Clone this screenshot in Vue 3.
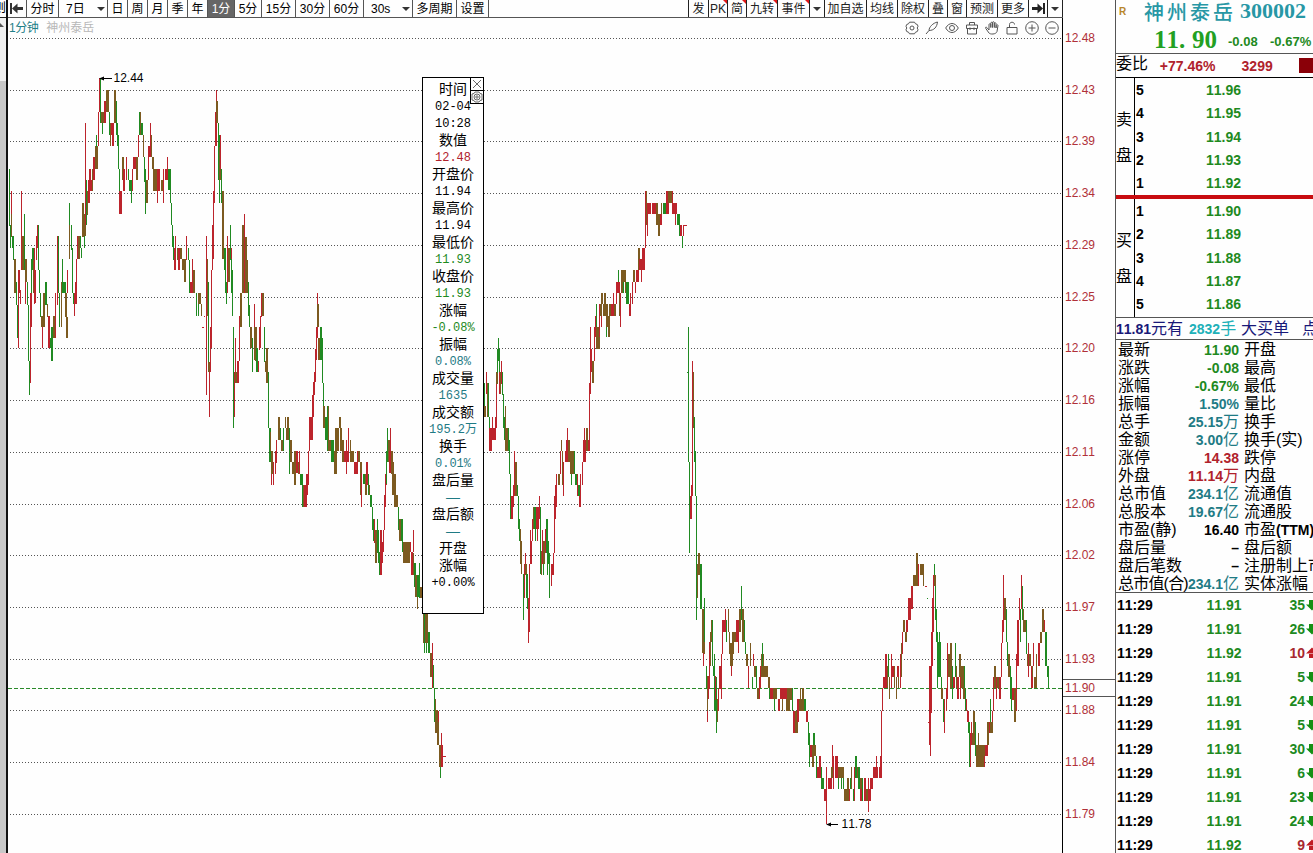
<template>
  <div class="terminal">
    <aside class="scroll-strip">
      <div class="strip-top"><span class="strip-char">则</span></div>
      <div class="strip-track"><i class="strip-arrow"></i></div>
      <div class="strip-thumb"></div>
    </aside>

    <main class="main">
      <header class="toolbar">
        <div
          v-for="(t, i) in leftTools"
          :key="'l' + i"
          class="tool"
          :class="{ active: t.active, drop: t.drop }"
          :style="{ width: t.w + 'px' }"
        >
          <svg v-if="t.icon" width="14" height="11" viewBox="0 0 14 11">
            <path d="M0 0h2v11H0z M2 5.5 7.5 0.5V4H13v3H7.5v3.5z" fill="#333" />
          </svg>
          <span v-else>{{ t.text }}</span>
          <i v-if="t.drop" class="caret"></i>
        </div>
        <div class="spacer"></div>
        <div
          v-for="(t, i) in rightTools"
          :key="'r' + i"
          class="tool right"
          :style="{ width: t.w + 'px' }"
        >
          <svg v-if="t.icon" width="13" height="11" viewBox="0 0 13 11">
            <path d="M11 0h2v11h-2z M11 5.5 5.5 0.5V4H0v3h5.5v3.5z" fill="#222" />
          </svg>
          <span v-else-if="t.text">{{ t.text }}</span>
          <i v-else class="caret"></i>
          <i v-if="t.hot" class="corner"></i>
        </div>
      </header>

      <section class="body">
        <div class="chart">
          <div class="chart-head">
            <div class="title"><b>1分钟</b><em>神州泰岳</em></div>
            <div class="icons">
              <svg viewBox="0 0 14 14">
                <path d="M4.500 1.200h5l1 1.600 1.800.7.7 1.800-.8 1.700.8 1.700-.7 1.800-1.800.7-1 1.600h-5l-1-1.600-1.800-.7L1 8.700 1.800 7 1 5.300l.7-1.800 1.800-.7z" />
                <circle cx="7" cy="7" r="2" />
              </svg>
              <svg viewBox="0 0 14 14"><path d="M1 13 4 9.500C4 6 8 2 12.500 1 12 6 9 9.500 4 9.500" /></svg>
              <svg viewBox="0 0 14 14"><path d="M.7 7C4 1 10 1 13.300 7 10 13 4 13 .7 7z" /><circle cx="7" cy="7" r="2.500" /></svg>
              <svg viewBox="0 0 14 14"><path d="M1.500 4h11v3.500h-11zM2.500 7.500V13h9V7.500M4.500 4V1.500h5V4M5 6.500v2.500M9 6.500v2.500" /></svg>
              <svg viewBox="0 0 14 14"><path d="M4 9 1.800 6.500C.8 5.500 0 6.500 1 7.800L4 12c1 1.500 7 1.700 8-1.500L13 4.500c0-1-1.500-1-1.700 0L11 7V2.500c0-1-1.700-1-1.700 0V6.500 1.500c0-1-1.800-1-1.800 0v5V2c0-1-1.700-1-1.700 0v4.500V3.500c0-1-1.800-1-1.800 0z" /></svg>
              <svg viewBox="0 0 14 14"><path d="M2 6.500h10V13H2zM4.500 6.500V3.500C4.500.5 9.500.5 9.500 3.500" /></svg>
              <svg viewBox="0 0 14 14"><circle cx="7" cy="7" r="6.300" /><path d="M3.500 7h7M7 3.500v7" /></svg>
              <svg viewBox="0 0 14 14"><circle cx="7" cy="7" r="6.300" /><path d="M3.500 7h7" /></svg>
            </div>
          </div>

          <svg class="plot" width="1054" height="835" viewBox="8 18 1054 835">
            <line
              v-for="g in axis"
              :key="g.y"
              x1="10"
              x2="1062"
              :y1="g.y + 0.5"
              :y2="g.y + 0.5"
              class="grid"
            />
            <line x1="8" x2="1062" y1="688.5" y2="688.5" class="last" />
            <g v-for="(s, i) in series" :key="i" :transform="s.transform">
              <rect
                v-for="(c, j) in s.bars"
                :key="j"
                :x="c.x"
                :y="c.y"
                :width="c.w"
                :height="c.h"
                :class="c.k"
              />
            </g>
            <path d="M101 78.500H112M827 824.500H838" class="pointer" />
            <path d="M99 78.500l5-2v4zM826 824.500l5-2v4z" />
            <text x="113.500" y="82">12.44</text>
            <text x="841.500" y="828">11.78</text>
          </svg>

          <div class="popup">
            <div class="popup-tools">
              <svg viewBox="0 0 12 12"><path d="M2 2l8 8M10 2l-8 8" /></svg>
              <svg viewBox="0 0 12 12">
                <path d="M4 1h4l1 1.500 2 .5v6l-2 .5L8 11H4L3 9.500 1 9V3l2-.5z" />
                <circle cx="6" cy="6" r="3" /><circle cx="6" cy="6" r="1.200" />
              </svg>
            </div>
            <div v-for="(p, i) in popup" :key="i" class="popup-row" :class="p[1]">{{ p[0] }}</div>
          </div>
        </div>

        <div class="axis">
          <span v-for="g in axis" :key="g.y" class="axis-label" :style="{ top: g.y - 26 + 'px' }">{{ g.label }}</span>
          <span class="axis-label current">11.90</span>
        </div>
      </section>
    </main>

    <aside class="quote">
      <div class="head">
        <div class="name"><i>R</i><b>神州泰岳</b><strong>300002</strong></div>
        <div class="price"><b>11<u>.</u>90</b><span>-0.08</span><span>-0.67%</span></div>
      </div>
      <div class="ratio">
        <span>委比</span><b>+77.46%</b><b>3299</b><i></i>
      </div>
      <div class="book sell">
        <div class="side"><span>卖</span><span>盘</span></div>
        <div class="levels">
          <div v-for="r in sells" :key="r[0]" class="level"><b>{{ r[0] }}</b><span>{{ r[1] }}</span></div>
        </div>
      </div>
      <div class="divider"></div>
      <div class="book buy">
        <div class="side"><span>买</span><span>盘</span></div>
        <div class="levels">
          <div v-for="r in buys" :key="r[0]" class="level"><b>{{ r[0] }}</b><span>{{ r[1] }}</span></div>
        </div>
      </div>
      <div class="alert">
        <span class="a1"><b>11.81</b>元有</span>
        <span class="a2"><b>2832</b>手</span>
        <span class="a3">大买单</span>
        <span class="a4">点</span>
      </div>
      <div class="stats">
        <div v-for="s in stats" :key="s[0]" class="stat">
          <span class="label" :class="{ tight: s[0].length > 5 }">{{ s[0] }}</span>
          <span class="value" :class="s[2]"><b>{{ s[1] }}</b>{{ s[4] }}</span>
          <span class="next">{{ s[3] }}<b v-if="s[5]">{{ s[5] }}</b></span>
        </div>
      </div>
      <div class="ticks">
        <div v-for="(t, i) in ticks" :key="i" class="tick">
          <b>11:29</b>
          <span>{{ t[0] }}</span>
          <em :class="t[2]">{{ t[1] }}</em>
          <svg width="8" height="12" viewBox="0 0 8 12" :class="t[2]">
            <path v-if="t[2] === 'down'" d="M4 1h6v5h-6zM1 5.500h12L7 11.500z" />
            <path v-else d="M4 6h6v5h-6zM1 6.500h12L7 .5z" />
          </svg>
        </div>
      </div>
    </aside>
  </div>
</template>

<script setup>
const leftTools = [
  { icon: true, w: 19 },
  { text: '分时', w: 32 },
  { text: '7日', w: 49, drop: true },
  { text: '日', w: 20 },
  { text: '周', w: 20 },
  { text: '月', w: 20 },
  { text: '季', w: 20 },
  { text: '年', w: 20 },
  { text: '1分', w: 27, active: true },
  { text: '5分', w: 27 },
  { text: '15分', w: 34 },
  { text: '30分', w: 34 },
  { text: '60分', w: 34 },
  { text: '30s', w: 49, drop: true },
  { text: '多周期', w: 44 },
  { text: '设置', w: 32 },
]

const rightTools = [
  { text: '发', w: 20 },
  { text: 'PK', w: 19, hot: true },
  { text: '简', w: 19, hot: true },
  { text: '九转', w: 31, hot: true },
  { text: '事件', w: 32, hot: true },
  { w: 15 },
  { text: '加自选', w: 42 },
  { text: '均线', w: 31 },
  { text: '除权', w: 31 },
  { text: '叠', w: 19 },
  { text: '窗', w: 19 },
  { text: '预测', w: 31 },
  { text: '更多', w: 31 },
  { icon: true, w: 19 },
  { w: 15 },
]

const axis = [
  '12.48', '12.43', '12.39', '12.34', '12.29', '12.25', '12.20', '12.16',
  '12.11', '12.06', '12.02', '11.97', '11.93', '11.88', '11.84', '11.79',
].map((label, i) => ({ label, y: Math.round(38 + i * 51.73) }))

// bars: colour key, x, high, low and optional width (default 3), at three units per pixel
const parse = (src) =>
  src.trim().split(/\s+/).map((t) => {
    const [x, y, b, w = 3] = t.slice(1).split(',').map(Number)
    return { k: t[0], x, y, w, h: b - y }
  })

const series = [
  {
    transform: 'translate(0 60) scale(0.33333)',
    bars: parse(`
      g27,327,497 g30,495,563 b33,462,530,4 r33,393,462 g36,527,563,5 g40,563,600 b42,597,698,6
      g48,665,735 g51,735,833 r54,630,865 r57,630,698,4 r60,690,732 r63,393,630 b67,527,630,6
      g72,462,630 r75,630,732 b76,597,665,5 g81,665,735 g84,735,902 g87,902,1004 r90,700,968
      r92,700,800,4 g94,597,700 g97,563,630,5 r102,563,732 b100,600,700 r105,630,730 r108,527,600
      r111,495,563,4 g114,495,630 g118,630,700 g120,700,770 b123,767,800,6 r126,800,865
      b129,700,800,5 g136,665,735,4 b140,732,770,5 r144,767,865,5 g150,833,865 g153,800,902,5
      b158,767,833,6 r164,700,833,5 r171,527,735 g174,527,700 g178,700,800 b182,665,800,5
      g186,597,700 g190,665,700,8 b196,700,770,6 b199,770,833,5 r202,630,700 g207,429,597
      b206,495,597,5 g213,495,570 g215,563,700 g218,700,732 r221,700,767 r225,665,732,5
      r229,597,700 r232,527,597 b235,527,597,5 g240,527,565 g243,563,595 b246,429,530,6
      g252,495,563 b252,462,527,6 r255,190,495 g259,360,495 b262,393,465 r265,360,430,5
      r267,327,393,6 r272,360,393,6 r279,291,360,5 b277,327,393 b284,258,327,9 g289,225,260
      r294,155,258 r297,55,155 g300,55,190 b303,155,190,8 g306,190,223 r312,123,190,6
      b319,90,155,8 g326,155,225,4 b329,190,258 r333,190,225,10 r337,190,258,6 b343,90,190,5
      g348,123,225 g351,190,258 g354,225,327 g356,327,395 r358,393,462,9 b366,291,360,5
      r370,327,393,6 r378,291,360 g384,327,360,4 g386,360,393,8 g393,360,428 r397,327,393
      r400,291,327,9 b409,291,360,4 r413,225,291 g417,155,225 b420,155,225 g424,190,225,6
      b428,225,290 g432,290,365 g435,327,462 b438,360,430,6 r444,258,360,4 r447,258,290,8
      r450,190,260 b453,225,290,4 b456,290,327,5 b459,327,393,12 r472,327,393,9 r472,393,430
      b482,360,393,10 r489,393,430 r489,327,393 r496,327,360,8 r501,291,327 g505,327,390,8
      g511,360,428 g514,428,495 g517,495,560 g520,527,600 r522,563,630,6 r526,527,565
      b530,563,600,6 r535,563,630,6 b541,563,597,5 b547,597,630,6 b553,597,665,5 r558,527,600
      g563,563,600,5 g567,600,698 r570,665,698,10 r576,597,665 b580,630,698,6 b587,698,735,5
      g589,700,767 b594,700,732,8 g595,732,767 b602,732,767 r606,801,804,6 r612,768,771
      r618,527,1004 b620,597,767,5 g624,665,905 r627,905,1070 b625,905,935,8 r630,800,935
      r633,630,865 r636,495,630 r639,393,598 r642,258,428 r645,155,258,5 r648,90,190
      b649,123,190,6 g653,190,360,4 g657,225,428 b658,260,360,5 r661,225,327 g664,327,428
      b667,393,597,5 g672,563,630,5 g676,597,700 g679,665,732 r682,527,700 b684,565,665,6
      g690,495,600 r693,563,660 g694,597,700 g697,630,767 g700,800,1104 r703,935,1070
      r705,833,968 b704,935,968,12 r712,902,968,4 r717,767,902 b721,700,800,6 b726,495,700,5
      r733,462,698 b736,530,698,5 b740,600,700,4 g743,665,767 g748,735,800 b751,800,865,5
      g757,833,935 b761,767,900,5 r763,732,800 b766,800,902,4 g769,865,935,5 r773,902,935,5
      r777,800,870 r781,767,865 r784,698,770 b787,698,767,5 g793,800,905 b794,902,935,8
      b799,865,968,5
    `),
  },
  {
    transform: 'translate(240 280) scale(0.33333)',
    bars: parse(`
      g84,275,445 g87,445,545,5 b91,457,514 b94,514,582,5 r94,582,615 r99,545,615,4
      r104,514,582,5 r109,480,550 b114,411,480,6 g119,445,480 b123,480,514,8 g129,445,514
      b134,411,445 b138,445,480,5 b142,411,480,5 g148,445,582 b150,480,545,5 b155,545,582,6
      b163,514,615,5 r168,514,580,5 b174,545,582,6 r177,514,582 g181,582,615,5 g186,582,680
      b188,615,680,5 r192,615,680,10 r198,582,645,5 r204,514,615 r207,411,514 r209,411,480,8
      r215,345,480 r218,307,411 r221,275,345 r224,207,307 r227,140,240 r231,40,175 b232,73,140,5
      b235,175,240,5 g240,140,240,6 g246,175,310 g248,310,411 b250,378,445,5 g256,411,480,4
      g261,378,514 b263,378,480,4 b265,480,514,8 g272,480,545,5 g277,480,545,6 b283,514,582,5
      b286,445,582,4 b291,445,514,5 b296,411,445,6 b301,445,514,4 b306,480,545,6 r311,514,545,6
      r318,480,582 r320,514,545,7 r325,445,545 b330,480,545,4 b333,514,545,8 r343,545,582,7
      r350,514,582,5 b355,514,545,6 b361,545,645,6 r363,580,680 g369,582,612,8 b375,582,645,5
      r379,545,615,4 g383,582,645 b386,615,645 g390,645,680,5 g395,680,750 g399,717,782
      b401,750,785,5 r402,717,790 b406,750,850,6 g411,717,820 g414,750,850,4 g417,817,884
      r420,750,884,5 r425,785,850,4 r429,750,817 r431,645,750 r434,582,680 r437,545,615
      g438,514,612 g441,445,545 b444,480,545,5 r448,514,580,4 r450,445,545 b454,514,582,4
      b457,545,645,6 b463,582,680,6 b469,645,680,6 g475,680,750 b477,717,782,5 g482,717,782,6
      g487,750,817 b489,785,850,12 b501,785,850,10 r509,785,817,4 r514,817,884,4 b518,820,884,5
      r519,750,817 g523,850,920,4 b526,884,950,5 b530,950,986,4 g532,884,950,6 g537,850,953
      b539,920,953,8 g545,884,953 b549,990,1088,4 g552,998,1120 b554,998,1088,10 g558,1088,1120
      g563,1055,1120,8 b570,1120,1190,6 r575,1088,1225 g579,1155,1225 g582,1225,1325
      b584,1258,1325,5 b586,1290,1358,8 b592,1325,1395,6 r594,1292,1325 g600,1395,1493
      b598,1395,1460,6 r603,1358,1395 r603,1395,1460,6 r609,1428,1431,8
    `),
  },
  {
    transform: 'translate(480 180) scale(0.33333 0.35714)',
    bars: parse(`
      g12,568,635 b12,632,663,5 r18,538,600 b20,568,663,5 g24,568,663 g27,663,695 r28,695,758,8
      r36,663,727 r36,695,727,12 r45,663,727 r48,538,695 b49,538,570,4 g51,473,540 g54,442,508
      g56,473,540 r58,538,600 b60,538,600 r63,507,570 g66,538,602 g69,600,695 g72,663,727,4
      b75,632,727 b76,695,758,8 g84,695,758 g87,727,822 g90,822,948 r94,884,948,4 r98,853,915
      r102,760,884 b105,790,884,5 g111,853,886 g114,884,978 g118,948,1010 b119,978,1075,5
      b122,1010,1104,5 g129,1104,1232 r131,1075,1170 r134,1044,1107 b136,1075,1106,5
      g139,1104,1170,4 g142,1138,1200 r144,1170,1296 r147,1075,1265 r150,980,1075,4
      r153,1010,1075 r156,948,1010 b159,915,978 g162,915,978,6 g165,978,1010 r169,915,978,8
      r171,978,1010 r177,885,948 g180,915,1104 b182,1040,1105,4 r186,980,1075 b189,1010,1075,6
      g190,1075,1105 r195,978,1044,4 g198,948,1044,5 g204,1010,1075 g202,1044,1105
      g207,1044,1170 r212,1075,1138 r214,1075,1105,6 r220,1044,1105 r223,884,1044 r226,853,948
      r228,822,915 b233,822,853,6 r240,758,822 b243,727,760,4 b247,758,853 r249,790,884,4
      r255,758,790 r258,727,790 r261,694,790,4 b265,727,790,4 b270,758,822,6 g273,822,853
      b277,758,822,4 g281,758,822,4 g285,822,853,5 r291,822,884 g295,853,884,4 r298,884,915,4
      r301,822,915 r305,822,853,4 r306,790,822 r309,727,790,8 r312,694,727 b318,694,758,5
      r323,727,758,6 r327,568,758 r330,411,600 r333,473,538 b336,507,568,5 r342,411,507
      r345,380,440 g348,346,440 b349,411,472,4 b355,411,472,5 r358,346,440 b360,346,380,5
      b364,316,346,4 r363,380,411 b369,346,380,6 b373,316,380,4 b378,346,411,6 g378,411,440
      b384,380,440,6 b387,346,380,6 r393,346,380,8 r399,316,380 b402,346,380,6 r408,285,346,4
      g414,252,316 r412,285,316,8 b416,316,380,5 r420,316,411 b424,252,316,4 b427,252,285,10
      g429,285,316 b435,285,316,5 g438,285,346,8 r447,346,380 r450,316,380,4 r456,285,346
      b459,252,285,5 r465,285,316 r468,252,285,8 b474,190,252,5 r477,220,252,12 r483,252,285
      r486,190,252,8 r495,30,190 b497,30,125,5 r501,65,156 r503,64,95,10 r515,64,95,13
      b528,64,125,5 b534,95,156,5 r540,95,125,6 b543,64,95,4 g548,64,95,9 r558,30,95,8
      b565,30,64,12 r576,30,95,4 r580,64,95,12 r585,95,125 g591,95,125,8 g598,125,156
      r600,125,156,6 g606,156,190 r609,126,157 r612,126,129,9 g624,411,790 g621,538,541
      g627,790,1044 r630,884,948,5 r634,853,915 r636,507,885 b638,538,695,4 g642,663,790
      g645,758,885 g648,884,1232 b650,1075,1170,5 b655,1044,1106,4 g660,1075,1200,4
      g663,1075,1200 b666,1200,1325,5 r669,1325,1360 g672,1170,1295 b672,1295,1328,4
      g678,1360,1425 b680,1390,1487,4 r681,1487,1518 r684,1390,1452 r687,1295,1425
      b690,1265,1360 b693,1232,1295,4 g697,1232,1360 g699,1360,1390 g702,1328,1487
      g705,1452,1487 r705,1390,1455 g708,1392,1548 b710,1452,1518 r713,1425,1487
      r717,1360,1425 r720,1360,1425,4 r723,1328,1452 r726,1232,1328 r729,1232,1265,8
      r735,1200,1265 g738,1232,1295 b743,1200,1265,5 b748,1265,1328 b750,1297,1360,10
      b757,1265,1328,4 b760,1265,1295,9 r753,1360,1390 r768,1232,1295,6 r774,1232,1325
      b777,1200,1265,5
    `),
  },
  {
    transform: 'translate(740 540) scale(0.33333)',
    bars: parse(`
      b0,207,275 g3,138,240 b5,207,307,6 g11,240,307 g14,307,342,5 b19,342,378,6 r24,378,443
      b30,309,378,4 g36,411,443 r38,342,378 b41,378,411,6 g48,378,443 b52,443,477,7 r58,411,477
      r61,378,443 b64,342,411,4 g66,309,378 b70,342,411 b73,378,411,10 b84,411,443,5 g88,443,477
      r91,443,477,8 b98,443,477,14 g102,477,512 r115,477,512,6 r120,443,477,20 b126,477,512,4
      b139,477,512,10 b140,443,480,18 g156,443,512 b159,512,546,4 r160,512,578,6 b166,512,578,7
      r171,477,546,5 b176,477,512,16 b180,443,477 b186,443,512,6 g192,477,512,6 r197,512,546,6
      g204,546,615 g207,578,680 r210,615,650,6 b216,615,680,5 g219,578,615,5 b222,615,648,6
      g228,648,713,4 r232,680,713,6 r238,648,713,5 g242,680,748,4 g246,713,748,6 r252,748,782,8
      r258,680,853 r263,713,748,12 r271,713,748 b274,682,713,4 r276,615,680 r279,648,748,4
      r285,648,713,9 b294,680,713,18 g294,713,748 g303,713,748 g309,713,748 b313,748,782,10
      b322,713,782,4 g330,713,748 b332,680,748,5 r327,748,782 g339,748,782 r342,680,782
      g346,648,713,4 b350,680,713,4 g355,680,748,5 r360,748,782,10 b361,713,748,5 g367,713,782
      r372,713,782,5 b378,748,782,8 r384,713,815 r387,748,782,5 r391,713,748,9 r400,680,713,15
      r408,648,680 r416,680,713,8 r421,648,713,4 r424,512,680 r427,443,512 r430,411,443,5
      r435,342,443,5 b440,378,443,5 g444,342,411 b447,411,477,4 r453,342,443 r456,378,411,7
      b462,378,443,4 b467,411,477,5 r472,378,411,4 b475,411,443 r479,342,443 b482,309,411,4
      r486,275,343 b489,240,275,6 b494,275,307,6 r499,240,275,5 r504,175,240,8 r512,138,207,8
      b520,105,138,10 b528,40,138,5 r533,72,138,5 b540,72,105,9 b548,72,138,5 r554,138,141,6
      g561,175,178 r567,378,615 r564,546,549 r570,378,647 r573,275,520,4 r576,175,378
      r579,105,275 g582,72,138 b581,105,138,6 g585,138,240 g588,207,307 g591,275,443
      g593,307,411,9 g597,275,411 g603,411,477 b604,443,477,5 g608,477,546,4 r612,477,578
      r617,443,512 r621,309,477 b624,342,411,5 b630,309,443,5 g636,378,477 r640,411,443,4
      g645,309,411 b648,378,443,4 r652,411,477,4 b658,342,411,5 b663,378,443,8 r660,411,477,4
      b670,411,477,5 g672,378,443 g675,443,512 r679,477,512 r682,512,546,4 g685,546,578,4
      g688,578,680 r691,578,680 r693,546,615,4 b696,578,615,8 b700,512,578,5 g705,546,648
      b708,615,680,10 b714,578,648,4 b718,615,680,16 r733,648,680 r735,615,648,8 b742,546,615,5
      r747,546,578 g750,477,546 b750,546,578,8 r756,512,546 r759,411,512,4 b763,378,443,5
      r768,411,477,4 b770,411,443,8 r778,411,477,5 r783,309,411 r786,240,309 r789,105,275
      b792,175,240,6 g798,207,307 g801,307,378 b804,342,411,6 g810,378,477 g813,411,512
      r816,443,480,6 b823,443,546,4 r827,342,512 r831,240,378,5 r837,175,240 g841,207,307
      r843,105,207 g846,138,240 b849,207,240 b850,240,275,10 g858,240,342 b862,342,378
      r864,309,411,4 b868,342,378,4 r873,378,443,5 b877,378,411 r879,309,378 b881,411,443,8
      b887,342,443,4 r893,342,378 r895,309,378,6 b901,275,309,6 b907,207,275,6 r912,240,275,4
      g916,275,378,4 g922,378,411 g925,378,443
    `),
  },
]

const popup = [
  ['时间'], ['02-04', 'num'], ['10:28', 'num'],
  ['数值'], ['12.48', 'num red'],
  ['开盘价'], ['11.94', 'num'],
  ['最高价'], ['11.94', 'num'],
  ['最低价'], ['11.93', 'num green'],
  ['收盘价'], ['11.93', 'num green'],
  ['涨幅'], ['-0.08%', 'num green'],
  ['振幅'], ['0.08%', 'num teal'],
  ['成交量'], ['1635', 'num teal'],
  ['成交额'], ['195.2万', 'num teal'],
  ['换手'], ['0.01%', 'num teal'],
  ['盘后量'], ['—', 'teal'],
  ['盘后额'], ['—', 'teal'],
  ['开盘'], ['涨幅'], ['+0.00%', 'num'],
]

const sells = [[5, '11.96'], [4, '11.95'], [3, '11.94'], [2, '11.93'], [1, '11.92']]
const buys = [[1, '11.90'], [2, '11.89'], [3, '11.88'], [4, '11.87'], [5, '11.86']]

// label, value, colour, neighbour label, unit, bold tail
const stats = [
  ['最新', '11.90', 'green', '开盘'],
  ['涨跌', '-0.08', 'green', '最高'],
  ['涨幅', '-0.67%', 'green', '最低'],
  ['振幅', '1.50%', 'teal', '量比'],
  ['总手', '25.15', 'teal', '换手', '万'],
  ['金额', '3.00', 'teal', '换手(实)', '亿'],
  ['涨停', '14.38', 'red', '跌停'],
  ['外盘', '11.14', 'red', '内盘', '万'],
  ['总市值', '234.1', 'teal', '流通值', '亿'],
  ['总股本', '19.67', 'teal', '流通股', '亿'],
  ['市盈(静)', '16.40', '', '市盈', '', '(TTM)'],
  ['盘后量', '–', '', '盘后额'],
  ['盘后笔数', '–', '', '注册制上市'],
  ['总市值(合)', '234.1', 'teal', '实体涨幅', '亿'],
]

const ticks = [
  ['11.91', 35, 'down'], ['11.91', 26, 'down'], ['11.92', 10, 'up'], ['11.91', 5, 'down'],
  ['11.91', 24, 'down'], ['11.91', 5, 'down'], ['11.91', 30, 'down'], ['11.91', 6, 'down'],
  ['11.91', 23, 'down'], ['11.91', 24, 'down'], ['11.92', 9, 'up'],
]
</script>

<style>
body {
  overflow: hidden;
  background: #fff;
}
</style>

<style scoped>
.terminal {
  display: flex;
  width: 1313px;
  height: 853px;
  overflow: hidden;
  background: #fefefe;
  color: #000;
  font-family: "Liberation Sans", "Noto Sans CJK SC", sans-serif;
  font-size: 12px;
  font-kerning: none;
}
i,
em {
  font-style: normal;
}
.green { color: #1e8a1e; }
.red { color: #b0222c; }
.teal { color: #1f7b85; }

.scroll-strip {
  display: flex;
  flex-direction: column;
  flex: none;
  width: 6px;
  border-right: 2px solid #111;
}
.strip-top {
  display: flex;
  justify-content: flex-end;
  height: 17px;
  border-bottom: 1px solid #222;
  overflow: hidden;
  line-height: 16px;
}
.strip-track {
  height: 63px;
  background: #f0f0f0;
}
.strip-arrow {
  display: block;
  width: 4px;
  height: 4px;
  margin-top: 5px;
  background: #555;
  clip-path: polygon(0 0, 100% 100%, 0 100%);
}
.strip-thumb {
  flex: 1;
  background: #c8c8c8;
}

.main {
  display: flex;
  flex-direction: column;
  flex: none;
  width: 1107px;
}
.toolbar {
  display: flex;
  box-sizing: border-box;
  width: 1055px;
  height: 18px;
  border-bottom: 1px solid #555;
}
.tool {
  position: relative;
  display: flex;
  align-items: center;
  justify-content: center;
  flex: none;
  box-sizing: border-box;
  height: 17px;
  border-right: 1px solid #555;
  line-height: 16px;
  white-space: nowrap;
}
.tool.drop {
  justify-content: space-between;
  padding: 0 2px 0 7px;
}
.tool.active {
  background: #666;
  color: #fff;
}
.tool.right {
  color: #222;
  border-right-color: #222;
}
.caret {
  border: 4px solid transparent;
  border-top-color: #333;
  border-bottom: 0;
}
.corner {
  position: absolute;
  top: 0;
  right: 0;
  border-top: 4px solid #e01818;
  border-left: 4px solid transparent;
}
.spacer {
  flex: 1;
  border-right: 1px solid #222;
}

.body {
  display: flex;
  flex: 1;
}
.chart {
  position: relative;
  width: 1054px;
  height: 835px;
  border-right: 1px solid #000;
}
.chart-head {
  position: absolute;
  z-index: 1;
  top: 2px;
  left: 1px;
  right: 3px;
  display: flex;
  justify-content: space-between;
}
.title {
  line-height: 17px;
}
.title b {
  margin-right: 8px;
  font-weight: 400;
  letter-spacing: -0.5px;
  color: #1f8088;
}
.title em {
  color: #b8b8b8;
}
.icons {
  display: flex;
  gap: 6px;
  padding-top: 1px;
}
.icons svg {
  width: 14px;
  height: 14px;
  fill: none;
  stroke: #555;
  stroke-width: 1;
}
.plot {
  display: block;
  font-size: 12px;
}
.grid {
  stroke: #555;
  stroke-dasharray: 1 2;
  shape-rendering: crispEdges;
}
.last {
  stroke: #2a8a2a;
  stroke-dasharray: 4 2;
  shape-rendering: crispEdges;
}
.pointer {
  stroke: #000;
}
rect {
  shape-rendering: crispEdges;
}
.r { fill: #bc242c; }
.g { fill: #208a22; }
.b { fill: #7c5a20; }

.popup {
  position: absolute;
  top: 59px;
  left: 414px;
  box-sizing: border-box;
  width: 62px;
  height: 537px;
  padding-top: 3px;
  border: 1px solid #000;
  background: #fff;
  text-align: center;
}
.popup-row {
  height: 17px;
  line-height: 17px;
  font-size: 14px;
  white-space: nowrap;
}
.popup-row.num {
  font-family: "Liberation Mono", "Noto Sans CJK SC", monospace;
  font-size: 12px;
  line-height: 19px;
}
.popup-tools {
  position: absolute;
  top: -1px;
  right: -1px;
  display: flex;
  flex-direction: column;
  width: 12px;
  border: 1px solid #000;
  background: #fff;
}
.popup-tools svg {
  width: 12px;
  height: 12px;
  fill: none;
  stroke: #444;
  stroke-width: 0.8;
}
.popup-tools svg + svg {
  border-top: 1px solid #000;
}

.axis {
  position: relative;
  width: 52px;
}
.axis-label {
  position: absolute;
  left: 2px;
  line-height: 16px;
  font-size: 12px;
  color: #b03038;
}
.axis-label.current {
  top: 661px;
  left: 0;
  width: 50px;
  padding-left: 2px;
  border-top: 1px solid #555;
  border-bottom: 1px solid #555;
}

.quote {
  flex: none;
  width: 197px;
  border-left: 1px solid #555;
  overflow: hidden;
  white-space: nowrap;
  font-size: 16px;
}
.head {
  height: 53px;
  border-bottom: 1px solid #555;
}
.name {
  display: flex;
  align-items: center;
  height: 22px;
  color: #2797a5;
}
.name i {
  width: 25px;
  padding-left: 3px;
  font-size: 10px;
  font-weight: bold;
  color: #b8862a;
}
.name b {
  width: 96px;
  font-size: 20px;
  font-weight: 500;
  letter-spacing: 3px;
}
.name strong {
  font-family: "Liberation Serif", serif;
  font-size: 22px;
}
.price {
  display: flex;
  align-items: center;
  height: 35px;
  padding-left: 38px;
  color: #1e8a1e;
}
.price b {
  width: 74px;
  font-family: "Liberation Serif", serif;
  font-size: 25px;
  color: #22a022;
}
.price u {
  display: inline-block;
  width: 13px;
  text-decoration: none;
}
.price span {
  width: 42px;
  padding-top: 4px;
  font-size: 13px;
  font-weight: bold;
}
.ratio {
  display: flex;
  align-items: center;
  height: 23px;
  border-bottom: 1px solid #000;
  color: #b0222c;
}
.ratio span {
  width: 45px;
  padding-bottom: 3px;
  line-height: 20px;
  color: #000;
}
.ratio b {
  width: 84px;
  font-size: 14px;
}
.ratio b + b {
  width: 59px;
}
.ratio i {
  flex: none;
  width: 14px;
  height: 15px;
  background: #8a0008;
}
.book {
  display: flex;
  height: 117px;
}
.book.buy {
  height: 118px;
}
.side {
  display: flex;
  flex-direction: column;
  justify-content: center;
  gap: 12px;
  width: 18px;
  padding-top: 2px;
  border-right: 1px solid #000;
  line-height: 24px;
}
.levels {
  display: flex;
  flex-direction: column;
  padding-top: 1px;
}
.level {
  display: flex;
  height: 23.300px;
  line-height: 23.300px;
  font-size: 14px;
}
.level b {
  width: 70px;
  padding-left: 1px;
}
.level span {
  font-weight: bold;
  color: #1e8a1e;
}
.divider {
  height: 4px;
  background: #c80c10;
}
.alert {
  display: flex;
  height: 21px;
  border-top: 1px solid #555;
  border-bottom: 1px solid #555;
  line-height: 21px;
  color: #181878;
}
.alert span {
  flex: none;
}
.alert b {
  font-size: 14px;
}
.a1 { width: 73px; }
.alert .a2 {
  width: 52px;
  color: #20b0b8;
}
.a3 { width: 61px; }
.stats {
  height: 252px;
  border-bottom: 1px solid #555;
}
.stat {
  display: flex;
  height: 18px;
  line-height: 20px;
}
.label {
  flex: none;
  width: 52px;
  padding-left: 2px;
}
.label.tight {
  letter-spacing: -0.8px;
}
.value {
  flex: none;
  width: 69px;
  margin-right: 5px;
  text-align: right;
}
.value b,
.next b {
  font-size: 14px;
}
.ticks {
  color: #1e8a1e;
  font-size: 14px;
  font-weight: bold;
}
.tick {
  display: flex;
  align-items: center;
  height: 24px;
}
.tick b {
  width: 90px;
  padding-left: 1px;
  color: #000;
}
.tick span {
  width: 58px;
}
.tick em {
  width: 41px;
  text-align: right;
}
.tick svg {
  flex: none;
  fill: #149014;
}
.tick .up {
  color: #a82830;
  fill: #c01c24;
}
</style>
